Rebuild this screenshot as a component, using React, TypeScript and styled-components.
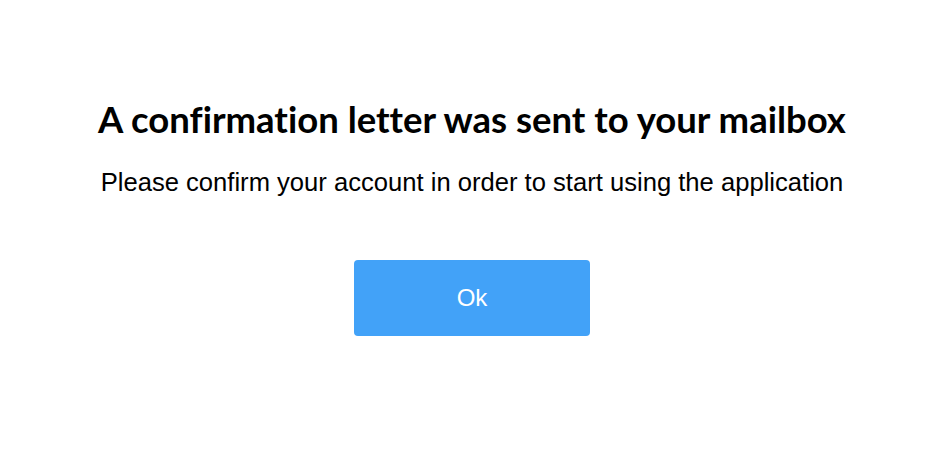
import React from "react";
import styled, { createGlobalStyle } from "styled-components";

const Global = createGlobalStyle`
  html, body { margin: 0; padding: 0; background: #ffffff; }
  body { font-family: "Liberation Sans", Arial, sans-serif; }
`;

const Page = styled.div`
  width: 940px;
  height: 460px;
  display: flex;
  flex-direction: column;
  align-items: center;
  padding: 97px 0 0 4px;
  box-sizing: border-box;
`;

const Title = styled.h1`
  margin: 0;
  font-family: "Lato", "Inter", sans-serif;
  font-weight: 700;
  font-size: 36.5px;
  line-height: 44px;
  color: #000000;
  white-space: nowrap;
  font-variant-ligatures: none;
`;

const Subtitle = styled.p`
  margin: 27px 0 0;
  font-family: "Liberation Sans", Arial, sans-serif;
  font-size: 25.6px;
  line-height: 28px;
  color: #000000;
  white-space: nowrap;
`;

const OkButton = styled.button`
  margin-top: 64px;
  width: 236px;
  height: 76px;
  border: none;
  border-radius: 4px;
  background: #42a2f8;
  color: #ffffff;
  font-family: "Liberation Sans", Arial, sans-serif;
  font-size: 24px;
  cursor: pointer;
`;

export default function App() {
  return (
    <>
      <Global />
      <Page>
        <Title>A confirmation letter was sent to your mailbox</Title>
        <Subtitle>Please confirm your account in order to start using the application</Subtitle>
        <OkButton>Ok</OkButton>
      </Page>
    </>
  );
}
